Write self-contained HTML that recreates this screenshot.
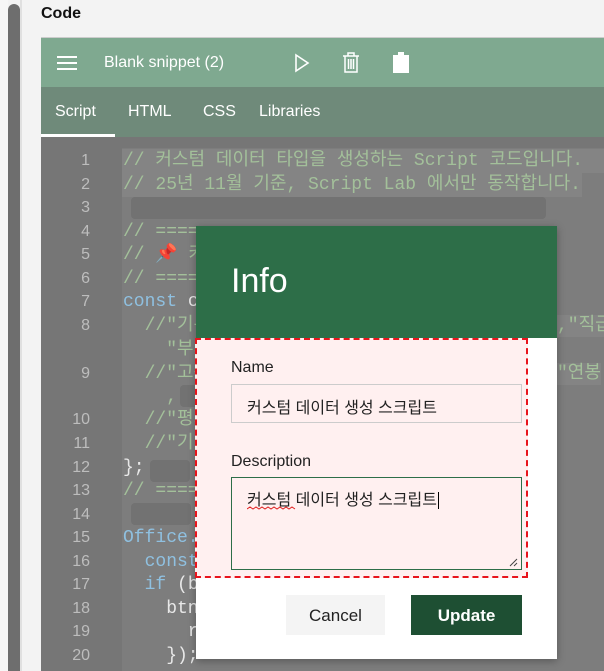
<!DOCTYPE html>
<html><head><meta charset="utf-8"><style>
body{margin:0;width:604px;height:671px;overflow:hidden;background:#f3f3f3;font-family:"Liberation Sans","Noto Sans CJK KR",sans-serif;position:relative}
.abs{position:absolute}
.code{font-family:"Liberation Mono","Noto Sans CJK KR",monospace;font-size:18px;line-height:22px;color:#a3c09a;white-space:pre}
.ln{position:absolute;left:60px;width:30px;text-align:right;color:#bdbdbd;font-family:"Liberation Sans",sans-serif;font-size:16px}
.kw{color:#8fc0e0}
.w{color:#e8e8e8}
</style></head><body>
<div class="abs" style="left:0;top:0;width:8px;height:671px;background:#f7f7f7"></div>
<div class="abs" style="left:8px;top:4px;width:12px;height:667px;background:#6e6e6e;border-radius:6px 6px 0 0"></div>
<div class="abs" style="left:20px;top:0;width:2px;height:671px;background:#e0e0e0"></div>
<div class="abs" style="left:41px;top:5px;font-weight:bold;font-size:16px;color:#111">Code</div>
<div class="abs" style="left:41px;top:37px;width:563px;height:50px;background:#7fa990;border-top:1px solid #ccc"></div>
<div class="abs" style="left:57px;top:56px;width:20px;height:2px;background:#fff;box-shadow:0 6px 0 #fff,0 12px 0 #fff"></div>
<div class="abs" style="left:104px;top:54px;color:#fff;font-size:16px">Blank snippet (2)</div>
<svg class="abs" style="left:294px;top:53px" width="16" height="20"><path d="M2 2 L14 10 L2 18 Z" fill="none" stroke="#fff" stroke-width="1.6"/></svg>
<svg class="abs" style="left:342px;top:52px" width="18" height="22"><path d="M1 4H17M6 4V1H12V4M3 4V20H15V4M6.5 7V17M9 7V17M11.5 7V17" fill="none" stroke="#fff" stroke-width="1.5"/></svg>
<svg class="abs" style="left:392px;top:51px" width="18" height="23"><path d="M1 4H6V1H12V4H17V22H1Z" fill="#fff"/></svg>
<div class="abs" style="left:41px;top:87px;width:563px;height:50px;background:#6f8a7a"></div>
<div class="abs" style="left:41px;top:134px;width:74px;height:3px;background:#fff"></div>
<div class="abs" style="left:55px;top:103px;color:#fff;font-size:16px">Script</div>
<div class="abs" style="left:128px;top:103px;color:#fff;font-size:16px">HTML</div>
<div class="abs" style="left:203px;top:103px;color:#fff;font-size:16px">CSS</div>
<div class="abs" style="left:259px;top:103px;color:#fff;font-size:16px">Libraries</div>
<div class="abs" style="left:41px;top:137px;width:563px;height:534px;background:#767676"></div>
<div class="abs" style="left:122px;top:148px;width:482px;height:523px;background:#7d7d7d"></div>
<div class="abs" style="left:122px;top:149px;width:482px;height:24px;background:#848484"></div>
<div class="abs" style="left:122px;top:173px;width:460px;height:24px;background:#848484"></div>
<div class="abs" style="left:131px;top:197px;width:415px;height:22px;background:#727272;border-radius:4px"></div>
<div class="abs" style="left:150px;top:460px;width:40px;height:22px;background:#727272;border-radius:4px"></div>
<div class="abs" style="left:131px;top:503px;width:60px;height:22px;background:#727272;border-radius:4px"></div>
<div class="abs" style="left:180px;top:385px;width:20px;height:22px;background:#727272;border-radius:4px"></div>
<div class="ln" style="top:152px">1</div><div class="ln" style="top:176px">2</div><div class="ln" style="top:199px">3</div><div class="ln" style="top:223px">4</div><div class="ln" style="top:246px">5</div><div class="ln" style="top:270px">6</div><div class="ln" style="top:293px">7</div><div class="ln" style="top:317px">8</div><div class="ln" style="top:365px">9</div><div class="ln" style="top:411px">10</div><div class="ln" style="top:435px">11</div><div class="ln" style="top:459px">12</div><div class="ln" style="top:482px">13</div><div class="ln" style="top:506px">14</div><div class="ln" style="top:529px">15</div><div class="ln" style="top:553px">16</div><div class="ln" style="top:576px">17</div><div class="ln" style="top:600px">18</div><div class="ln" style="top:623px">19</div><div class="ln" style="top:647px">20</div>
<div class="abs code" style="left:123px;top:150px">// 커스텀 데이터 타입을 생성하는 Script 코드입니다.</div>
<div class="abs code" style="left:123px;top:174px">// 25년 11월 기준, Script Lab 에서만 동작합니다.</div>
<div class="abs code" style="left:123px;top:221px">// =====</div>
<div class="abs code" style="left:123px;top:244px">// <span style="color:#e07080">📌</span> 커</div>
<div class="abs code" style="left:123px;top:268px">// =====</div>
<div class="abs code" style="left:123px;top:291px"><span class="kw">const</span> <span class="w">ca</span></div>
<div class="abs code" style="left:123px;top:315px">  //"기본</div>
<div class="abs code" style="left:123px;top:339px">    "부서</div>
<div class="abs code" style="left:123px;top:363px">  //"고용</div>
<div class="abs code" style="left:123px;top:386px">    ,</div>
<div class="abs code" style="left:123px;top:409px">  //"평가</div>
<div class="abs code" style="left:123px;top:433px">  //"기타</div>
<div class="abs code w" style="left:123px;top:457px">};</div>
<div class="abs code" style="left:123px;top:480px">// =====</div>
<div class="abs code kw" style="left:123px;top:527px">Office.o</div>
<div class="abs code" style="left:123px;top:551px">  <span class="kw">const</span></div>
<div class="abs code" style="left:123px;top:574px">  <span class="kw">if</span> <span class="w">(bt</span></div>
<div class="abs code w" style="left:123px;top:598px">    btn.</div>
<div class="abs code w" style="left:123px;top:621px">      ru</div>
<div class="abs code w" style="left:123px;top:645px">    });</div>
<div class="abs code" style="left:557px;top:315px;background:#848484">,"직급</div>
<div class="abs code" style="left:557px;top:363px;background:#848484">"연봉</div>
<!-- dialog -->
<div class="abs" style="left:196px;top:226px;width:361px;height:433px;background:#fff;box-shadow:0 2px 8px rgba(0,0,0,.3)"></div>
<div class="abs" style="left:196px;top:226px;width:361px;height:112px;background:#2d6e48"></div>
<div class="abs" style="left:231px;top:262px;color:#fff;font-size:34px;font-weight:300">Info</div>
<div class="abs" style="left:195px;top:338px;width:329px;height:236px;background:#fff0f0;border:2px dashed #e8141c"></div>
<div class="abs" style="left:231px;top:359px;font-size:16px;color:#222">Name</div>
<div class="abs" style="left:231px;top:384px;width:289px;height:37px;border:1px solid #ccc;background:#fff0f0"></div>
<div class="abs" style="left:247px;top:394px;font-size:16px;color:#222">커스텀 데이터 생성 스크립트</div>
<div class="abs" style="left:231px;top:453px;font-size:16px;color:#222">Description</div>
<div class="abs" style="left:231px;top:477px;width:289px;height:91px;border:1px solid #2d6e48;background:#fff0f0"></div>
<div class="abs" style="left:247px;top:486px;font-size:16px;color:#222">커스텀 데이터 생성 스크립트<span style="border-left:1px solid #000;margin-left:1px"></span></div>
<svg class="abs" style="left:247px;top:506px" width="50" height="5"><path d="M0 3 L3 1 L6 3 L9 1 L12 3 L15 1 L18 3 L21 1 L24 3 L27 1 L30 3 L33 1 L36 3 L39 1 L42 3 L45 1 L48 3" fill="none" stroke="#e02020" stroke-width="1"/></svg>
<svg class="abs" style="left:508px;top:557px" width="10" height="10"><path d="M2 9L9 2M6 9L9 6" stroke="#444" stroke-width="1"/></svg>
<div class="abs" style="left:286px;top:595px;width:99px;height:40px;background:#f4f4f4;text-align:center;line-height:42px;font-size:17px;color:#222">Cancel</div>
<div class="abs" style="left:411px;top:595px;width:111px;height:40px;background:#1e4f33;text-align:center;line-height:42px;font-size:17px;color:#fff;font-weight:bold">Update</div>
</body></html>
